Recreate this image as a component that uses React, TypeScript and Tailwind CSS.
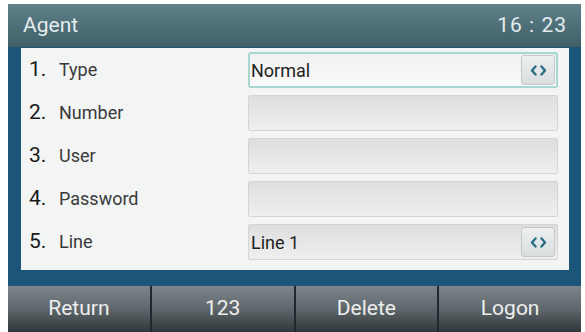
import React from 'react';

const rows = [
  { n: '1.', label: 'Type', value: 'Normal', select: true, active: true },
  { n: '2.', label: 'Number', value: '', select: false, active: false },
  { n: '3.', label: 'User', value: '', select: false, active: false },
  { n: '4.', label: 'Password', value: '', select: false, active: false },
  { n: '5.', label: 'Line', value: 'Line 1', select: true, active: false },
];

const softkeys = ['Return', '123', 'Delete', 'Logon'];

const Arrows = () => (
  <svg width="17" height="11" viewBox="0 0 17 11" fill="none">
    <path d="M5.5 1.5 L2 5.5 L5.5 9.5" stroke="#2a6f86" strokeWidth="2.4" strokeLinecap="round" strokeLinejoin="round" />
    <path d="M11.5 1.5 L15 5.5 L11.5 9.5" stroke="#2a6f86" strokeWidth="2.4" strokeLinecap="round" strokeLinejoin="round" />
  </svg>
);

export default function App() {
  return (
    <div className="w-[585px] h-[332px] bg-white pt-[4px] pl-[8px] pr-[4px] overflow-hidden" style={{ fontFamily: 'Roboto, "Liberation Sans", sans-serif' }}>
      <div className="flex flex-col h-full">
        <div className="h-[43px] flex items-center justify-between pl-[15px] pr-[14px] bg-gradient-to-b from-[#5f8189] to-[#3f5f69] text-[#e4ecee]">
          <span className="text-[21px]">Agent</span>
          <span className="text-[21px] tracking-[1px]">16 : 23</span>
        </div>
        <div className="bg-[#1b5579] pl-[13px] pr-[12px] pt-[1px] pb-[16px]">
          <div className="bg-[#f3f4f4] h-[222px] pt-[4px] pr-[11px] pl-[8px] flex flex-col gap-[7px]">
            {rows.map((r) => (
              <div key={r.n} className="h-[36px] flex items-center">
                <div className="w-[219px] flex items-baseline text-[#3a3a3a]">
                  <span className="text-[21px] text-[#1a1a1a] w-[30px]">{r.n}</span>
                  <span className="text-[18px]">{r.label}</span>
                </div>
                <div
                  className={
                    r.active
                      ? 'flex-1 h-full flex items-center border-2 border-[#a8d6d1] rounded-[3px] bg-gradient-to-b from-[#f0f0f0] to-[#fafafa] pl-[1px] pr-[1px]'
                      : 'flex-1 h-full flex items-center border border-[#d4d4d4] rounded-[2px] bg-gradient-to-b from-[#dedede] to-[#efefef] pl-[2px] pr-[2px]'
                  }
                >
                  <span className="flex-1 text-[18px] text-[#222]">{r.value}</span>
                  {r.select && (
                    <div className="w-[34px] h-[30px] flex items-center justify-center border border-[#c4c8c8] rounded-[3px] bg-gradient-to-b from-[#eef0f0] to-[#d8dddd]">
                      <Arrows />
                    </div>
                  )}
                </div>
              </div>
            ))}
          </div>
        </div>
        <div className="flex-1 grid grid-cols-4 gap-[2px] bg-[#1e282d]">
          {softkeys.map((k) => (
            <div key={k} className="flex items-center justify-center bg-gradient-to-b from-[#7d878b] via-[#5e676b] to-[#30373a] text-[#eeeeee] text-[21px]">
              {k}
            </div>
          ))}
        </div>
      </div>
    </div>
  );
}
